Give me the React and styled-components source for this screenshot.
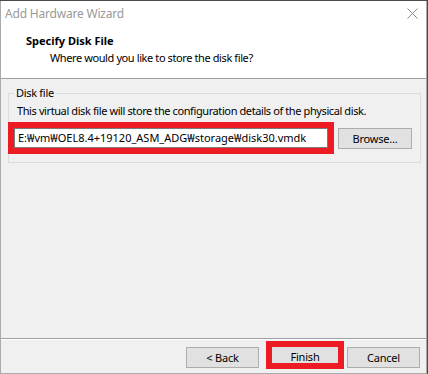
import React from 'react';
import styled, { createGlobalStyle } from 'styled-components';

const GlobalStyle = createGlobalStyle`
  html, body {
    margin: 0;
    padding: 0;
    background: #4a4a4a;
  }
  body {
    font-family: "Noto Sans", "Noto Sans CJK KR", sans-serif;
  }
`;

const Window = styled.div`
  margin-top: 1px;
  width: 427px;
  height: 373px;
  box-sizing: border-box;
  border: 1px solid #aaaaaa;
  border-top: none;
  display: flex;
  flex-flow: column;
  background: #f0f0f0;
`;

const Top = styled.div`
  background: #ffffff;
  border-bottom: 1px solid #a0a0a0;
  height: 78px;
  box-sizing: border-box;
`;

const TitleBar = styled.div`
  height: 25px;
  display: flex;
  align-items: center;
  justify-content: space-between;
  padding-left: 4px;
  padding-right: 8px;
`;

const Title = styled.div`
  font-size: 12px;
  letter-spacing: -0.2px;
  color: #999999;
`;

const Header = styled.div`
  padding: 7px 0 0 25px;
`;

const HeaderTitle = styled.div`
  font-size: 11px;
  font-weight: bold;
  line-height: 16px;
  color: #000;
`;

const HeaderSub = styled.div`
  font-size: 11px;
  letter-spacing: -0.4px;
  line-height: 16px;
  margin-top: 1px;
  padding-left: 24px;
  color: #000;
`;

const Body = styled.div`
  flex: 1;
  padding: 6px 7px 0 7px;
`;

const Group = styled.fieldset`
  margin: 0;
  width: 413px;
  box-sizing: border-box;
  border: 1px solid #dcdcdc;
  padding: 0 8px 8px 8px;
`;

const Legend = styled.legend`
  padding: 0 2px;
  margin-left: -3px;
  font-size: 11px;
  letter-spacing: -0.3px;
  line-height: 16px;
  color: #000;
`;

const Description = styled.div`
  font-size: 11px;
  letter-spacing: -0.4px;
  line-height: 16px;
  margin-top: 2px;
  color: #000;
`;

const FieldRow = styled.div`
  display: flex;
  align-items: center;
  margin-top: 3px;
  margin-left: -9px;
`;

const Highlight = styled.div`
  border: 6px solid #ed1c24;
  display: flex;
  margin: ${(props) => props.m || '0'};
`;

const PathInput = styled.div`
  width: 314px;
  height: 20px;
  box-sizing: border-box;
  border: 1px solid #7a7a7a;
  background: #fff;
  font-size: 11px;
  line-height: 18px;
  padding-left: 3px;
  color: #000;
  white-space: nowrap;
`;

const Button = styled.div`
  width: ${(props) => props.w || 73}px;
  height: ${(props) => props.h || 21}px;
  margin: ${(props) => props.m || '0'};
  box-sizing: border-box;
  border: ${(props) => (props.bare ? 'none' : '1px solid #adadad')};
  background: #e1e1e1;
  font-size: 11px;
  letter-spacing: -0.2px;
  line-height: 19px;
  text-align: center;
  color: #000;
  overflow: hidden;
`;

const Footer = styled.div`
  border-top: 1px solid #a0a0a0;
  box-shadow: inset 0 1px 0 #ffffff;
  height: 35px;
  box-sizing: border-box;
  display: flex;
  align-items: flex-start;
  justify-content: flex-end;
  padding: 2px 6px 0 0;
`;

function CloseIcon() {
  return (
    <svg width="11" height="11" viewBox="0 0 11 11">
      <path d="M0.5 0.5 L10.5 10.5 M10.5 0.5 L0.5 10.5" stroke="#8a8a8a" strokeWidth="1" />
    </svg>
  );
}

function App() {
  return (
    <>
      <GlobalStyle />
      <Window>
        <Top>
          <TitleBar>
            <Title>Add Hardware Wizard</Title>
            <CloseIcon />
          </TitleBar>
          <Header>
            <HeaderTitle>Specify Disk File</HeaderTitle>
            <HeaderSub>Where would you like to store the disk file?</HeaderSub>
          </Header>
        </Top>
        <Body>
          <Group>
            <Legend>Disk file</Legend>
            <Description>
              This virtual disk file will store the configuration details of the physical disk.
            </Description>
            <FieldRow>
              <Highlight>
                <PathInput>E:₩vm₩OEL8.4+19120_ASM_ADG₩storage₩disk30.vmdk</PathInput>
              </Highlight>
              <Button w={74} m="0 0 0 4px">Browse...</Button>
            </FieldRow>
          </Group>
        </Body>
        <Footer>
          <Button m="6px 0 0 0">&lt; Back</Button>
          <Highlight m="0 3px 0 7px">
            <Button bare w={66} h={16}>Finish</Button>
          </Highlight>
          <Button m="6px 0 0 0">Cancel</Button>
        </Footer>
      </Window>
    </>
  );
}

export default App;
